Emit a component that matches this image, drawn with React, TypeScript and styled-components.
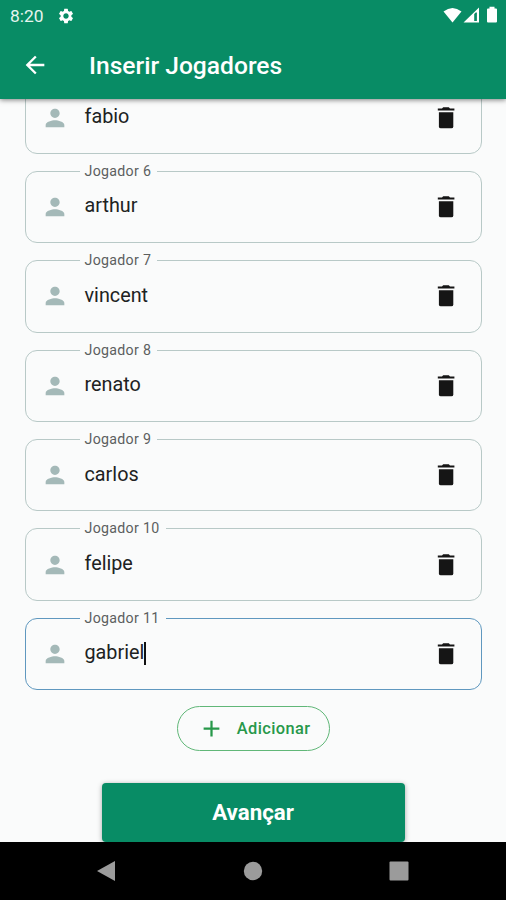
import React from 'react';
import styled, { createGlobalStyle } from 'styled-components';
import { MdAdd, MdArrowBack, MdPerson, MdSettings } from 'react-icons/md';

const GlobalStyle = createGlobalStyle`
  *, *::before, *::after { box-sizing: border-box; }
  body { margin: 0; font-family: Roboto, "Liberation Sans", sans-serif; background: #fafbfb; }
  button { font-family: inherit; padding: 0; border: 0; background: none; }
  svg { display: block; flex: none; }
`;

const Screen = styled.div`
  width: 506px;
  height: 900px;
  display: flex;
  flex-direction: column;
  overflow: hidden;
  background: #fafbfb;
`;

const Header = styled.header`
  position: relative;
  z-index: 2;
  flex: none;
  height: 99px;
  color: #fff;
  background: #088c65;
  box-shadow: 0 1px 5px rgba(0, 0, 0, 0.5);
`;

const StatusBar = styled.div`
  height: 32px;
  padding: 0 7px 0 10px;
  display: flex;
  align-items: center;
`;

const Clock = styled.span`
  width: 47px;
  font-size: 17.4px;
  line-height: 32px;
  color: #e6f5ef;
`;

const StatusIcons = styled.svg`
  margin: -2px 0 0 auto;
`;

const TitleBar = styled.div`
  height: 66px;
  padding-left: 21px;
  display: flex;
  align-items: center;
`;

const BackButton = styled.button`
  width: 68px;
  color: #fff;
`;

const Title = styled.h1`
  margin: 0;
  padding-top: 2px;
  font-size: 24.6px;
  line-height: 30px;
  font-weight: 500;
`;

const Content = styled.main`
  flex: 1;
  min-height: 0;
  overflow: hidden;
  display: flex;
  flex-direction: column;
  align-items: center;
`;

const PlayerList = styled.div`
  flex: none;
  width: 457px;
  margin: -17.6px 0 0 1px;
  display: flex;
  flex-direction: column;
  gap: 16.9px;
`;

const Field = styled.div<{ $focused: boolean }>`
  position: relative;
  height: 72.5px;
  padding: 0 26px 0 14.5px;
  display: flex;
  align-items: center;
  border: 1px solid ${(p) => (p.$focused ? '#5f98bf' : '#b8c9c7')};
  border-radius: 12px;
  color: #a4b9b8;
`;

const Label = styled.label`
  position: absolute;
  top: -9px;
  left: 54px;
  padding: 0 6px 0 4.5px;
  font-size: 14.2px;
  line-height: 17px;
  letter-spacing: 0.3px;
  color: #5c5f5f;
  background: #fafbfb;
  white-space: nowrap;
`;

const PlayerName = styled.span`
  flex: 1;
  margin-left: 16px;
  padding-bottom: 1.4px;
  display: flex;
  align-items: center;
  font-size: 19.8px;
  line-height: 24px;
  color: #202222;
`;

const Caret = styled.i`
  width: 2px;
  height: 23px;
  background: #111;
`;

const DeleteButton = styled.button`
  color: #151515;
`;

const AddButton = styled.button`
  flex: none;
  width: 153px;
  height: 45px;
  margin-top: 16px;
  padding: 0 18px 0 20px;
  display: flex;
  align-items: center;
  justify-content: space-between;
  border: 1px solid #60b778;
  border-radius: 23px;
  color: #27984a;
  font-size: 16.4px;
  font-weight: 500;
  letter-spacing: 0.4px;
`;

const NextButton = styled.button`
  flex: none;
  width: 303px;
  height: 59px;
  margin-top: 32px;
  padding-bottom: 1px;
  border-radius: 4px;
  color: #fff;
  background: #088c65;
  box-shadow: 0 1px 5px rgba(0, 0, 0, 0.35);
  font-size: 22.3px;
  font-weight: 700;
`;

const NavBar = styled.nav`
  position: relative;
  z-index: 1;
  flex: none;
  height: 58px;
  padding: 0 97px 0 96px;
  display: flex;
  align-items: center;
  justify-content: space-between;
  background: #000;
`;

type Player = { number: number; name: string; focused?: boolean; scrolled?: boolean };

const players: Player[] = [
  { number: 5, name: 'fabio', scrolled: true },
  { number: 6, name: 'arthur' },
  { number: 7, name: 'vincent' },
  { number: 8, name: 'renato' },
  { number: 9, name: 'carlos' },
  { number: 10, name: 'felipe' },
  { number: 11, name: 'gabriel', focused: true },
];

function TrashIcon() {
  return (
    <svg width="18" height="24" viewBox="0 0 18 24" fill="currentColor">
      <path d="M.8 2.4H5L6.2 1.2h5.6L13 2.4h4.4v2H.8Z" />
      <path d="M1.9 6.3h14.4v14.1q0 1.9-1.9 1.9H3.8q-1.9 0-1.9-1.9Z" />
    </svg>
  );
}

function PlayerField({ number, name, focused = false, scrolled = false }: Player) {
  return (
    <Field $focused={focused}>
      {!scrolled && <Label>Jogador {number}</Label>}
      <MdPerson size={28} />
      <PlayerName>
        {name}
        {focused && <Caret />}
      </PlayerName>
      <DeleteButton aria-label={`Remover ${name}`}>
        <TrashIcon />
      </DeleteButton>
    </Field>
  );
}

export default function App() {
  return (
    <Screen>
      <GlobalStyle />
      <Header>
        <StatusBar>
          <Clock>8:20</Clock>
          <MdSettings size={18} />
          <StatusIcons width="56" height="18" viewBox="0 0 56 18" fill="#fff">
            <path d="M0.5 5.5Q9.5-1.5 18.5 5.5L9.5 16.5Z" />
            <path fillRule="evenodd" d="M20.5 16.5L36 1.5v15ZM31.2 8v7h2.7V6.5h-1.2Z" />
            <path d="M44 3.5q0-1 1-1h1.5V.8h5v1.7H53q1 0 1 1v12q0 1-1 1h-8q-1 0-1-1Z" />
          </StatusIcons>
        </StatusBar>
        <TitleBar>
          <BackButton aria-label="Voltar">
            <MdArrowBack size={28} />
          </BackButton>
          <Title>Inserir Jogadores</Title>
        </TitleBar>
      </Header>
      <Content>
        <PlayerList>
          {players.map((player) => (
            <PlayerField key={player.number} {...player} />
          ))}
        </PlayerList>
        <AddButton>
          <MdAdd size={27} />
          Adicionar
        </AddButton>
        <NextButton>Avançar</NextButton>
      </Content>
      <NavBar>
        <svg width="20" height="22" viewBox="0 0 20 22" fill="#9b9b9b">
          <path d="M1 11L19 1v20Z" />
        </svg>
        <svg width="20" height="20" viewBox="0 0 20 20" fill="#9b9b9b">
          <circle cx="10" cy="10" r="9.2" />
        </svg>
        <svg width="20" height="20" viewBox="0 0 20 20" fill="#9b9b9b">
          <rect x=".5" y=".5" width="19" height="19" rx="1" />
        </svg>
      </NavBar>
    </Screen>
  );
}
